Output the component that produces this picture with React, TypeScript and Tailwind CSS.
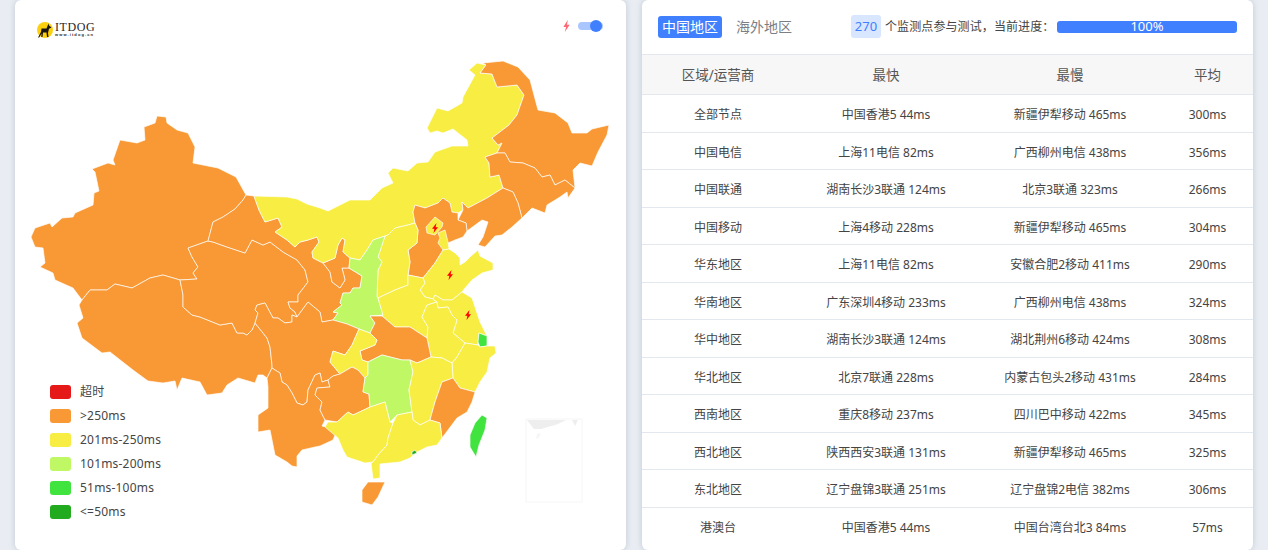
const ORANGE = "#f89935";
const YELLOW = "#f7ed43";
const LIME = "#bff765";
const GREEN = "#41e33f";
const DARK = "#23ab1f";

// page coordinates, viewBox starts at the map's top-left corner
const provinces: { name: string; fill: string; points: string }[] = [
  { name: "xinjiang", fill: ORANGE, points: "157,116 166,117 167,123 177,130 188,133 195,147 193,163 218,168 236,177 246,195 243,200 235,209 223,217 213,222 208,241 188,248 192,257 198,267 193,273 197,279 180,280 163,275 150,278 132,288 115,284 107,290 90,290 82,300 73,288 55,280 53,273 40,267 45,263 43,248 35,247 31,237 35,228 50,223 52,227 62,218 73,217 75,213 93,205 94,193 99,191 95,172 92,169 108,163 115,165 113,160 120,140 137,143 145,140 144,127 155,123" },
  { name: "tibet", fill: ORANGE, points: "180,280 163,275 150,278 132,288 115,284 107,290 90,290 82,300 79,305 83,318 77,323 82,338 102,353 110,352 133,370 148,381 163,383 175,381 177,390 182,378 200,382 207,395 222,393 227,385 238,378 255,383 258,375 263,375 267,378 272,368 272,365 270,347 267,338 255,323 252,330 247,335 243,333 237,333 232,323 220,325 200,317 192,315 183,307 183,295" },
  { name: "qinghai", fill: ORANGE, points: "208,241 213,242 227,247 245,253 252,240 263,245 270,242 283,252 297,260 305,270 308,282 298,295 298,302 288,302 290,308 295,312 297,317 292,315 292,322 285,323 278,318 273,318 265,303 257,305 255,310 258,313 255,323 252,330 247,335 243,333 237,333 232,323 220,325 200,317 192,315 183,307 183,295 180,280 197,279 193,273 198,267 192,257 188,248" },
  { name: "gansu", fill: ORANGE, points: "243,200 246,195 254,196 259,210 265,222 278,218 282,227 275,232 287,240 295,247 300,242 308,240 317,237 319,242 312,252 313,258 323,263 330,272 332,282 340,288 345,280 342,268 349,268 362,276 360,288 353,288 350,293 343,293 340,303 342,305 333,312 338,313 333,320 322,322 320,312 308,302 297,317 295,312 290,308 288,302 298,302 298,295 308,282 305,270 297,260 283,252 270,242 263,245 252,240 245,253 227,247 213,242 208,241 213,222 223,217 235,209" },
  { name: "ningxia", fill: ORANGE, points: "323,263 335,258 338,245 342,238 345,240 343,252 350,258 349,268 342,268 345,280 340,288 332,282 330,272" },
  { name: "neimenggu", fill: YELLOW, points: "254,196 287,197 297,199 307,204 320,208 328,211 350,200 370,200 382,188 393,183 388,173 393,168 408,171 417,163 428,162 435,152 452,146 468,146 467,140 453,129 443,133 437,131 430,133 427,128 437,108 448,111 462,103 463,97 475,75 469,70 477,63 486,65 480,73 492,74 497,87 517,85 524,95 517,115 509,125 492,138 498,145 502,143 497,153 485,157 489,163 490,177 499,175 503,188 487,198 468,208 462,202 463,210 458,213 452,212 450,203 443,198 438,203 425,208 415,205 413,212 415,223 408,225 395,228 388,235 385,236 373,240 367,250 360,260 350,258 343,252 345,240 342,238 338,245 335,258 323,263 313,258 312,252 319,242 317,237 308,240 300,242 295,247 287,240 275,232 282,227 278,218 265,222 259,210" },
  { name: "heilongjiang", fill: ORANGE, points: "483,63 503,61 518,67 530,80 538,110 555,113 568,123 572,133 587,133 592,129 609,125 607,135 598,152 592,166 580,163 573,170 575,188 565,180 555,185 550,175 542,177 535,168 523,163 510,162 505,153 497,153 502,143 498,145 492,138 509,125 517,115 524,95 517,85 497,87 492,74 480,73 486,65" },
  { name: "jilin", fill: ORANGE, points: "485,157 497,153 505,153 510,162 523,163 535,168 542,177 550,175 555,185 565,180 575,188 568,198 567,192 560,197 547,205 545,213 532,208 522,218 518,203 513,192 503,188 499,175 490,177 489,163" },
  { name: "liaoning", fill: ORANGE, points: "462,202 468,208 487,198 503,188 513,192 518,203 522,218 512,227 502,235 495,236 485,247 478,245 483,237 488,222 482,220 467,231 466,223 458,220 463,210" },
  { name: "hebei", fill: ORANGE, points: "413,212 415,205 425,208 438,203 443,198 450,203 452,212 458,213 458,220 466,223 467,231 463,237 455,240 448,243 449,249 443,250 435,263 423,278 408,275 410,262 408,250 417,243 418,230 415,223" },
  { name: "beijing", fill: YELLOW, points: "435,217 443,223 442,227 435,235 427,233 426,227" },
  { name: "tianjin", fill: YELLOW, points: "438,233 445,230 448,242 449,249 443,250 438,243 440,238" },
  { name: "shandong", fill: YELLOW, points: "449,249 455,253 460,258 460,265 465,262 470,257 478,250 480,256 493,263 493,270 482,273 472,280 465,288 462,292 452,300 443,300 435,295 433,299 425,297 420,290 425,283 423,278 435,263 443,250" },
  { name: "shanxi", fill: YELLOW, points: "385,236 388,235 395,228 408,225 415,223 418,230 417,243 408,250 410,262 408,275 408,285 395,290 378,298 377,297 378,270 382,262 378,257" },
  { name: "shaanxi", fill: LIME, points: "350,258 360,260 367,250 373,240 385,236 378,257 382,262 378,270 377,297 378,298 383,315 370,316 375,323 370,333 359,329 347,324 333,320 338,313 333,312 342,305 340,303 343,293 350,293 353,288 360,288 362,276 349,268" },
  { name: "henan", fill: YELLOW, points: "378,298 395,290 408,285 408,275 423,278 425,283 420,290 425,297 433,299 437,302 427,305 422,317 428,327 427,338 410,327 395,327 382,316 383,315" },
  { name: "jiangsu", fill: YELLOW, points: "435,295 443,300 452,300 462,292 472,298 476,310 480,322 487,336 479,333 478,342 478,345 465,343 453,333 457,320 452,315 448,307 438,308 437,302 433,299" },
  { name: "anhui", fill: YELLOW, points: "427,305 437,302 438,308 448,307 452,315 457,320 453,333 465,343 457,357 452,363 442,358 431,357 427,338 428,327 422,317" },
  { name: "shanghai", fill: GREEN, points: "479,333 487,336 487,346 480,347 478,342" },
  { name: "zhejiang", fill: YELLOW, points: "452,363 457,357 465,343 478,345 480,347 487,346 495,346 496,353 490,358 487,372 480,382 475,392 460,388 453,378" },
  { name: "hubei", fill: ORANGE, points: "370,316 382,316 395,327 410,327 427,338 431,357 417,363 410,360 402,360 382,355 368,362 362,360 360,351 375,345 377,340 370,333 375,323" },
  { name: "sichuan", fill: ORANGE, points: "255,323 258,313 255,310 257,305 265,303 273,318 278,318 285,323 292,322 292,315 297,317 308,302 320,312 322,322 333,320 347,324 359,329 352,345 345,355 333,351 330,362 340,374 333,376 328,380 322,382 320,373 315,375 308,390 307,402 303,405 297,403 292,393 287,385 282,382 280,373 275,370 272,368 272,365 270,347 267,338" },
  { name: "chongqing", fill: YELLOW, points: "359,329 370,333 377,340 375,345 360,351 362,360 368,362 368,375 365,378 358,370 352,367 340,374 330,362 333,351 345,355 352,345" },
  { name: "yunnan", fill: ORANGE, points: "272,368 275,370 280,373 282,382 287,385 292,393 297,403 303,405 307,402 308,390 315,375 320,373 322,382 328,380 330,387 317,388 315,395 322,402 320,410 325,420 322,426 330,428 337,430 333,440 320,446 315,447 302,450 297,456 297,467 292,466 287,462 275,455 270,430 258,432 258,415 268,408 268,387 267,378" },
  { name: "guizhou", fill: ORANGE, points: "330,387 328,380 333,376 340,374 352,367 358,370 365,378 363,392 369,394 370,407 353,415 348,412 337,422 325,420 320,410 322,402 315,395 317,388" },
  { name: "hunan", fill: LIME, points: "368,362 382,355 402,360 410,360 413,372 409,390 412,412 397,415 390,422 385,402 370,407 369,394 363,392 365,378 368,375" },
  { name: "jiangxi", fill: YELLOW, points: "410,360 417,363 431,357 442,358 452,363 453,378 442,382 435,402 430,420 420,425 413,420 412,412 409,390 413,372" },
  { name: "fujian", fill: ORANGE, points: "453,378 460,388 475,392 472,402 467,412 457,418 448,430 442,438 440,423 430,420 435,402 442,382" },
  { name: "guangxi", fill: YELLOW, points: "370,407 385,402 390,422 393,423 388,438 387,445 378,455 373,462 365,463 347,457 343,450 338,438 325,427 328,422 337,422 348,412 353,415" },
  { name: "guangdong", fill: YELLOW, points: "393,423 397,415 412,412 413,420 420,425 430,420 440,423 442,438 437,445 427,447 417,452 410,458 400,462 380,464 380,478 373,479 371,463 373,462 378,455 387,445 388,438" },
  { name: "hainan", fill: ORANGE, points: "362,490 368,482 385,482 378,497 372,505 362,502" },
  { name: "hongkong", fill: DARK, points: "412,452 415,450 417,453 412,455" },
  { name: "taiwan", fill: GREEN, points: "482,415 487,418 485,430 479,445 476,457 470,447 470,435 475,423" },
];

const legend = [
  { color: "bg-[#e61919]", label: "超时" },
  { color: "bg-[#f89935]", label: ">250ms" },
  { color: "bg-[#f7ed43]", label: "201ms-250ms" },
  { color: "bg-[#bff765]", label: "101ms-200ms" },
  { color: "bg-[#41e33f]", label: "51ms-100ms" },
  { color: "bg-[#23ab1f]", label: "<=50ms" },
];

const rows = [
  ["全部节点", "中国香港5 44ms", "新疆伊犁移动 465ms", "300ms"],
  ["中国电信", "上海11电信 82ms", "广西柳州电信 438ms", "356ms"],
  ["中国联通", "湖南长沙3联通 124ms", "北京3联通 323ms", "266ms"],
  ["中国移动", "上海4移动 228ms", "新疆伊犁移动 465ms", "304ms"],
  ["华东地区", "上海11电信 82ms", "安徽合肥2移动 411ms", "290ms"],
  ["华南地区", "广东深圳4移动 233ms", "广西柳州电信 438ms", "324ms"],
  ["华中地区", "湖南长沙3联通 124ms", "湖北荆州6移动 424ms", "308ms"],
  ["华北地区", "北京7联通 228ms", "内蒙古包头2移动 431ms", "284ms"],
  ["西南地区", "重庆8移动 237ms", "四川巴中移动 422ms", "345ms"],
  ["西北地区", "陕西西安3联通 131ms", "新疆伊犁移动 465ms", "325ms"],
  ["东北地区", "辽宁盘锦3联通 251ms", "辽宁盘锦2电信 382ms", "306ms"],
  ["港澳台", "中国香港5 44ms", "中国台湾台北3 84ms", "57ms"],
];

function Bolt({ x, y }: { x: number; y: number }) {
  return <polygon transform={`translate(${x} ${y})`} points="1.5,-5 -3,0.8 -0.6,0.8 -1.5,5 3,-0.8 0.6,-0.8" fill="#ff0000" />;
}

function ChinaMap() {
  return (
    <svg viewBox="15 60 611 450" className="block w-[611px] h-[450px]">
      {provinces.map((p) => (
        <polygon key={p.name} points={p.points} fill={p.fill} stroke="#fff" strokeWidth="0.8" strokeLinejoin="round" strokeOpacity="0.85" />
      ))}
      <Bolt x={435} y={228} />
      <Bolt x={450} y={275} />
      <Bolt x={468} y={315} />
      <rect x="526" y="419" width="56" height="83" fill="#fff" stroke="#f6f6f6" />
      <polygon points="527,420 566,420 558,424 541,429 534,429" fill="#eeeeee" />
      <polygon points="572,420 578,420 575,426" fill="#eeeeee" />
      <polygon points="537,434 541,433 539,438 536,439" fill="#f6f6f6" />
    </svg>
  );
}

function Logo() {
  return (
    <div className="flex items-center gap-[2px]">
      <svg viewBox="0 0 16 16" className="w-4 h-4">
        <circle cx="8" cy="8" r="8" fill="#fdd00f" />
        <path d="M1 15.5 L4 10 L4.5 6.5 L9.5 6.5 L11.5 1.5 L12 3.5 L14.5 5.5 L12 6.8 L11 11 L11.5 15 L10 15 L9.5 10.5 L6 10.5 L5.5 15 L4.3 15 L4.5 11.5 L2.2 15.5 Z" fill="#1a1512" />
      </svg>
      <div className="flex flex-col font-['Liberation_Serif',serif] text-[#2c2523] -mt-[1px]">
        <span className="text-[12px] leading-[10px] tracking-[0.6px]">ITDOG</span>
        <span className="text-[4px] leading-[5px] tracking-[1.1px] font-bold font-['Liberation_Sans',sans-serif]">www.itdog.cn</span>
      </div>
    </div>
  );
}

function Legend() {
  return (
    <div className="absolute left-[35px] top-[381px] flex flex-col gap-[2px]">
      {legend.map((item) => (
        <div key={item.label} className="flex items-center h-[22px] gap-[9px]">
          <span className={`w-[21px] h-[14px] rounded-[3px] ${item.color}`} />
          <span className="text-[12px] text-[#454545] tracking-[0.2px]">{item.label}</span>
        </div>
      ))}
    </div>
  );
}

function MapCard() {
  return (
    <div className="relative w-[611px] h-[550px] shrink-0 bg-white rounded-md shadow-[0_0_6px_rgba(120,135,160,0.35)] overflow-hidden">
      <div className="flex items-start justify-between h-[60px] pt-[22px] pl-[22px] pr-[23px]">
        <Logo />
        <div className="flex items-center gap-[7px] h-[8px]">
          <svg viewBox="0 0 10 14" className="w-[9px] h-[14px]">
            <polygon points="6.5,0 1.5,8 4.5,8 3,14 8.5,5.5 5.5,5.5" fill="#ff6a76" />
          </svg>
          <div className="relative w-[25px] h-[8px] rounded-full bg-[#aac6ff]">
            <span className="absolute right-[1px] top-[-2px] w-[12px] h-[12px] rounded-full bg-[#4080ff]" />
          </div>
        </div>
      </div>
      <ChinaMap />
      <Legend />
    </div>
  );
}

function ResultCard() {
  return (
    <div className="w-[611px] h-[550px] shrink-0 bg-white rounded-md shadow-[0_0_6px_rgba(120,135,160,0.35)] overflow-hidden">
      <div className="flex items-center h-[54px] pl-4 pr-4 pb-[1px]">
        <span className="h-[22px] px-[4px] flex items-center rounded-[3px] bg-[#4080ff] text-white text-[14px]">中国地区</span>
        <span className="ml-[14px] text-[14px] text-[#7b7f85]">海外地区</span>
        <span className="ml-[59px] h-[23px] w-[30px] flex items-center justify-center rounded-[3px] bg-[#d9e6ff] text-[#4080ff] text-[13px]">270</span>
        <span className="ml-[4px] text-[12px] text-[#444] tracking-[0.1px] whitespace-nowrap">个监测点参与测试，当前进度：</span>
        <div className="ml-auto w-[180px] h-[12px] rounded-[3px] bg-[#4080ff] flex items-center justify-center text-white text-[13px]">100%</div>
      </div>
      <div className="grid grid-cols-[152px_184px_184px_91px] items-center h-[41px] pt-[2px] bg-[#f7f7f7] border-y border-[#e3e8ee] text-center text-[13.5px] text-[#555]">
        <span>区域/运营商</span>
        <span>最快</span>
        <span>最慢</span>
        <span>平均</span>
      </div>
      {rows.map((row) => (
        <div key={row[0]} className="grid grid-cols-[152px_184px_184px_91px] items-center h-[37.5px] pt-[4px] border-b border-[#e3e8ee] last:border-b-0 text-center text-[12px] text-[#444]">
          {row.map((cell, i) => (
            <span key={i} className="whitespace-nowrap">{cell}</span>
          ))}
        </div>
      ))}
    </div>
  );
}

export default function App() {
  return (
    <div className="flex gap-4 h-[550px] pl-[15px] bg-[#e9edf3] overflow-hidden font-['Noto_Sans','Noto_Sans_CJK_SC',sans-serif]">
      <MapCard />
      <ResultCard />
    </div>
  );
}
